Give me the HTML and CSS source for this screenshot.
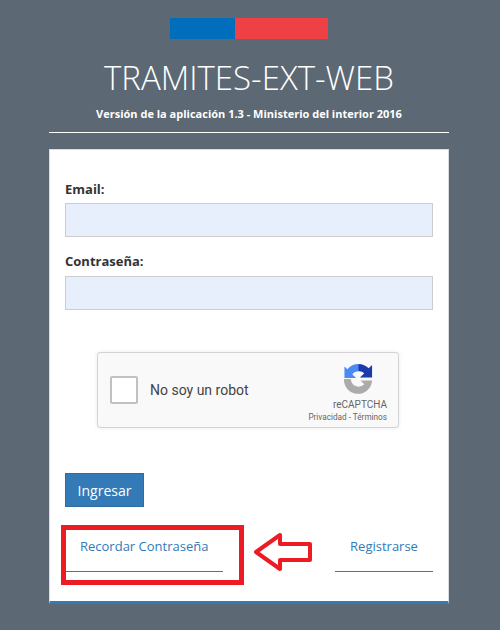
FILE: index.html
```html
<!DOCTYPE html>
<html lang="es">
<head>
<meta charset="utf-8">
<title>TRAMITES-EXT-WEB</title>
<link rel="stylesheet" href="styles.css">
</head>
<body>
<div class="page">
  <div class="flag"><span class="flag-blue"></span><span class="flag-red"></span></div>
  <h1 class="title">TRAMITES-EXT-WEB</h1>
  <p class="subtitle">Versión de la aplicación 1.3 - Ministerio del interior 2016</p>
  <div class="rule"></div>
  <form class="card">
    <label class="label" for="email">Email:</label>
    <div class="input" id="email"></div>
    <label class="label label-second" for="pass">Contraseña:</label>
    <div class="input" id="pass"></div>
    <div class="captcha">
      <span class="check"></span>
      <span class="captcha-text">No soy un robot</span>
      <div class="captcha-brand">
        <svg class="captcha-logo" viewBox="0 0 64 64" width="31" height="31">
          <path fill="#ababab" d="M2 33H16A16.500 16.500 0 0 0 44 44L36 36H60A29 29 0 0 1 2 33Z"/>
          <path fill="#4a8af4" d="M32 2A30 30 0 0 0 9 13L3 7V31H27L19 23A16 16 0 0 1 32 17L36 10Z"/>
          <path fill="#1c3aa9" d="M32 2A30 30 0 0 1 53 11L60 4V30H35L44 21A16 16 0 0 0 32 17Z"/>
        </svg>
        <span class="brand-name">reCAPTCHA</span>
        <span class="brand-links">Privacidad - Términos</span>
      </div>
    </div>
    <button class="submit" type="button">Ingresar</button>
    <div class="links">
      <a class="link link-remember" href="#">Recordar Contraseña</a>
      <a class="link link-register" href="#">Registrarse</a>
    </div>
    <div class="mark-box"></div>
    <svg class="mark-arrow" viewBox="0 0 60 40" width="60" height="40">
      <path d="M3 20 27 3V12H57V28H27V37Z" fill="none" stroke="#ed1c24" stroke-width="4" stroke-linejoin="round"/>
    </svg>
  </form>
</div>
</body>
</html>
```

FILE: styles.css
```css
html, body {
  margin: 0;
  padding: 0;
  height: 100%;
  background: #5c6873;
}
body {
  font-family: "Open Sans", "Noto Sans", sans-serif;
  overflow: hidden;
}
.page {
  box-sizing: border-box;
  width: 400px;
  margin-left: 49px;
  padding-top: 18px;
  display: flex;
  flex-direction: column;
}
.flag {
  display: flex;
  align-self: center;
  width: 158px;
  height: 21px;
}
.flag-blue { width: 65px; background: #006ebb; }
.flag-red { flex: 1; background: #ef4145; }
.title {
  margin: 19px 0 0;
  color: #fff;
  font-size: 33px;
  font-weight: 300;
  line-height: 40px;
  text-align: center;
}
.subtitle {
  margin: 8px 0 0;
  color: #fff;
  font-size: 11px;
  font-weight: 700;
  line-height: 16px;
  text-align: center;
}
.rule {
  height: 1px;
  margin-top: 10px;
  background: #fff;
}
.card {
  position: relative;
  box-sizing: border-box;
  height: 455px;
  margin-top: 16px;
  padding: 30px 15px 0;
  background: #fff;
  border: 1px solid #d9dbde;
  border-bottom: 3px solid #337ab7;
  display: flex;
  flex-direction: column;
}
.label {
  display: block;
  color: #333;
  font-size: 13px;
  font-weight: 700;
  line-height: 18px;
  margin-bottom: 5px;
}
.label-second { margin-top: 15px; margin-bottom: 6px; }
.input {
  box-sizing: border-box;
  height: 34px;
  background: #e8effc;
  border: 1px solid #ccc;
}
.captcha {
  box-sizing: border-box;
  align-self: flex-start;
  width: 302px;
  height: 76px;
  margin-top: 42px;
  margin-left: 32px;
  padding-left: 12px;
  background: #f9f9f9;
  border: 1px solid #d3d3d3;
  border-radius: 3px;
  box-shadow: 0 0 4px rgba(0, 0, 0, .08);
  display: flex;
  align-items: center;
  font-family: Roboto, sans-serif;
}
.check {
  box-sizing: border-box;
  width: 28px;
  height: 28px;
  background: #fff;
  border: 2px solid #c1c1c1;
  border-radius: 2px;
}
.captcha-text {
  margin-left: 12px;
  color: #444;
  font-size: 14px;
}
.captcha-brand {
  margin-left: auto;
  margin-right: 11px;
  padding-top: 6px;
  display: flex;
  flex-direction: column;
  align-items: flex-end;
  color: #666;
}
.captcha-logo { margin-bottom: 5px; margin-right: 13px; }
.brand-name { font-size: 10px; line-height: 12px; white-space: nowrap; }
.brand-links { font-size: 8.2px; line-height: 12px; white-space: nowrap; }
.submit {
  box-sizing: border-box;
  align-self: flex-start;
  width: 79px;
  height: 34px;
  margin-top: 45px;
  padding: 0;
  color: #fff;
  background: #337ab7;
  border: 1px solid #2e6da4;
  font-family: inherit;
  font-size: 14px;
}
.links {
  margin-top: 21px;
  display: flex;
  justify-content: space-between;
}
.link {
  box-sizing: border-box;
  height: 44px;
  padding-top: 9px;
  color: #337ab7;
  font-size: 13px;
  line-height: 18px;
  text-decoration: none;
  border-bottom: 1px solid #337ab7;
}
.link-remember { width: 158px; padding-left: 15px; }
.link-register { width: 98px; text-align: center; }
.mark-box {
  position: absolute;
  left: 11px;
  top: 375px;
  box-sizing: border-box;
  width: 183px;
  height: 60px;
  border: 5px solid #ed1c24;
}
.mark-arrow {
  position: absolute;
  left: 203px;
  top: 382px;
}
```
